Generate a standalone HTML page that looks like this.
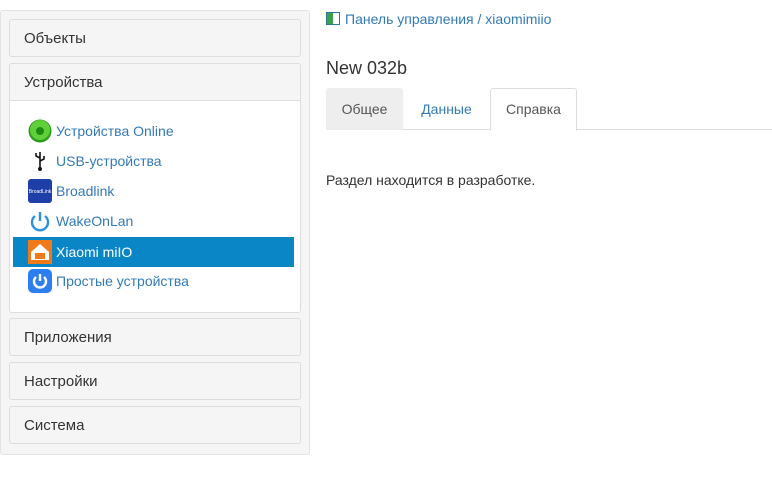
<!DOCTYPE html>
<html><head><meta charset="utf-8"><style>
*{box-sizing:border-box;margin:0;padding:0}
body{width:772px;height:495px;background:#fff;font-family:"Liberation Sans",sans-serif;font-size:14px;color:#333;position:relative;overflow:hidden}
.side{position:absolute;left:0;top:10px;width:310px;height:445px;background:#f5f5f5;border:1px solid #e3e3e3;border-radius:3px}
.ph{position:absolute;left:8px;width:292px;height:38px;background:#f5f5f5;border:1px solid #ddd;border-radius:3px;padding:0 14px;line-height:37px;font-size:15px;color:#333}
.pb{position:absolute;left:8px;top:90px;width:292px;height:212px;background:#fff;border:1px solid #ddd;border-top:none;border-radius:0 0 3px 3px}
.it{position:absolute;left:13px;width:281px;height:30px;line-height:30px;padding-left:43px;color:#337ab7;font-size:14px}
.it.sel{background:#0a86c7;color:#fff}
.ic{position:absolute;left:15px;top:3px;width:24px;height:24px}
a{color:#337ab7;text-decoration:none}
.tab{position:absolute;top:88px;height:42px;line-height:42px;text-align:center;font-size:14px}
</style></head><body>
<div class="side">
<div class="ph" style="top:8px">Объекты</div>
<div class="ph" style="top:52px;border-radius:3px 3px 0 0;background:#f5f5f5">Устройства</div>
<div class="pb"></div>
<div class="ph" style="top:307px">Приложения</div>
<div class="ph" style="top:351px">Настройки</div>
<div class="ph" style="top:395px">Система</div>
</div>
<div class="it" style="top:116px"><svg class="ic" viewBox="0 0 24 24"><circle cx="12" cy="12" r="11.5" fill="#2a9a1a"/><circle cx="12" cy="11" r="10" fill="#5fcf3a"/><circle cx="12" cy="12" r="4" fill="#1e8a12"/></svg>Устройства Online</div>
<div class="it" style="top:146px"><svg class="ic" viewBox="0 0 24 24"><path d="M12 3v17M12 9l-4-2v-3M12 12l4-2v-3" stroke="#111" stroke-width="1.6" fill="none"/><circle cx="12" cy="20" r="2" fill="#111"/></svg>USB-устройства</div>
<div class="it" style="top:176px"><svg class="ic" viewBox="0 0 24 24"><rect width="24" height="24" rx="3" fill="#1f3fa8"/><text x="12" y="14" font-size="5" fill="#fff" text-anchor="middle" font-family="Liberation Sans">BroadLink</text></svg>Broadlink</div>
<div class="it" style="top:206px"><svg class="ic" viewBox="0 0 24 24"><path d="M7 7a8 8 0 1 0 10 0" stroke="#2f8fdb" stroke-width="2.4" fill="none"/><path d="M12 3v9" stroke="#2f8fdb" stroke-width="2.4"/></svg>WakeOnLan</div>
<div class="it sel" style="top:237px"><svg class="ic" viewBox="0 0 24 24"><rect width="24" height="24" fill="#f07a1a"/><path d="M3 12L12 4l9 8v8H3z" fill="#fff"/><rect x="7" y="13" width="10" height="6" fill="#f07a1a"/></svg>Xiaomi miIO</div>
<div class="it" style="top:266px"><svg class="ic" viewBox="0 0 24 24"><rect width="24" height="24" rx="5" fill="#2d7ff0"/><path d="M8 8a6 6 0 1 0 8 0" stroke="#fff" stroke-width="2.4" fill="none"/><path d="M12 5v7" stroke="#fff" stroke-width="2.4"/></svg>Простые устройства</div>

<svg style="position:absolute;left:326px;top:12px" width="14" height="13" viewBox="0 0 14 13"><rect x="0.5" y="0.5" width="13" height="12" fill="#fff" stroke="#2b7a9a"/><rect x="1" y="1" width="6" height="11" fill="#3aa04a"/></svg>
<div style="position:absolute;left:345px;top:11px;font-size:14px"><a>Панель управления</a> <span style="color:#337ab7">/</span> <a>xiaomimiio</a></div>
<div style="position:absolute;left:326px;top:58px;font-size:18px;color:#333">New 032b</div>
<div style="position:absolute;left:326px;top:129px;width:446px;border-top:1px solid #ddd"></div>
<div class="tab" style="left:326px;width:77px;background:#eee;border-radius:3px 3px 0 0;color:#555">Общее</div>
<div class="tab" style="left:403px;width:87px;color:#337ab7">Данные</div>
<div class="tab" style="left:490px;width:87px;background:#fff;border:1px solid #ddd;border-bottom:1px solid #fff;border-radius:3px 3px 0 0;color:#555;height:43px;line-height:41px">Справка</div>
<div style="position:absolute;left:326px;top:172px;font-size:14px">Раздел находится в разработке.</div>
</body></html>
